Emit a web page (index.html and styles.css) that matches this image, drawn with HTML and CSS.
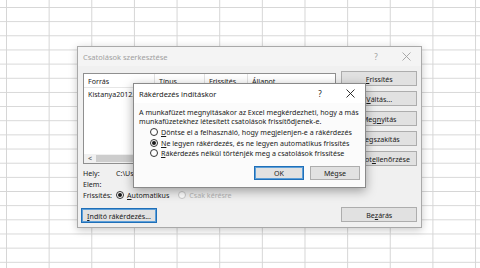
FILE: index.html
```html
<!DOCTYPE html>
<html lang="hu">
<head>
    <meta charset="UTF-8">
    <meta name="viewport" content="width=device-width, initial-scale=1.0">
    <title>Csatolások szerkesztése</title>
    <link rel="stylesheet" href="styles.css">
</head>
<body>
    <div class="sheet">

        <div class="dialog links">
            <div class="titlebar inactive">
                <span class="title">Csatolások szerkesztése</span>
                <span class="tb-btn">?</span>
                <span class="tb-btn">
                    <svg width="9" height="9" viewBox="0 0 9 9"><path d="M0.5 0.5 L8.5 8.5 M8.5 0.5 L0.5 8.5" stroke="currentColor" stroke-width="0.9"/></svg>
                </span>
            </div>
            <div class="links-body">
                <div class="left-col">
                    <div class="listbox">
                        <div class="list-head">
                            <span class="col c-src">Forrás</span>
                            <span class="col c-type">Típus</span>
                            <span class="col c-upd">Frissítés</span>
                            <span class="col c-state">Állapot</span>
                        </div>
                        <div class="list-row">Kistanya2012.xlsx</div>
                        <div class="hscroll">
                            <span class="arrow">&lt;</span>
                            <span class="thumb"></span>
                        </div>
                    </div>

                    <div class="info">
                        <div class="info-row"><span class="lbl">Hely:</span><span>C:\Users\Dokumentumok</span></div>
                        <div class="info-row"><span class="lbl">Elem:</span></div>
                        <div class="info-row">
                            <span class="lbl">Frissítés:</span>
                            <span class="radio checked"></span><span class="opt"><u>A</u>utomatikus</span>
                            <span class="radio disabled"></span><span class="opt disabled">Csak kérésre</span>
                        </div>
                    </div>

                    <button class="btn default start"><u>I</u>ndító rákérdezés...</button>
                </div>

                <div class="right-col">
                    <button class="btn"><u>F</u>rissítés</button>
                    <button class="btn"><u>V</u>áltás...</button>
                    <button class="btn">Meg<u>n</u>yitás</button>
                    <button class="btn">Megszakítás</button>
                    <button class="btn">Állapot <u>e</u>llenőrzése</button>
                    <button class="btn close-btn">Be<u>z</u>árás</button>
                </div>
            </div>
        </div>

        <div class="dialog prompt">
            <div class="titlebar">
                <span class="title">Rákérdezés indításkor</span>
                <span class="tb-btn">?</span>
                <span class="tb-btn">
                    <svg width="9" height="9" viewBox="0 0 9 9"><path d="M0.5 0.5 L8.5 8.5 M8.5 0.5 L0.5 8.5" stroke="currentColor" stroke-width="0.9"/></svg>
                </span>
            </div>
            <div class="prompt-body">
                <p class="msg">A munkafüzet megnyitásakor az Excel megkérdezheti, hogy a más<br>munkafüzetekhez létesített csatolások frissítődjenek-e.</p>
                <div class="choices">
                    <div class="choice"><span class="radio"></span><span><u>D</u>öntse el a felhasználó, hogy megjelenjen-e a rákérdezés</span></div>
                    <div class="choice"><span class="radio checked"></span><span><u>N</u>e legyen rákérdezés, és ne legyen automatikus frissítés</span></div>
                    <div class="choice"><span class="radio"></span><span><u>R</u>ákérdezés nélkül történjék meg a csatolások frissítése</span></div>
                </div>
                <div class="actions">
                    <button class="btn default">OK</button>
                    <button class="btn">Mégse</button>
                </div>
            </div>
        </div>

    </div>
</body>
</html>
```

FILE: styles.css
```css
* {
    box-sizing: border-box;
}
body {
    margin: 0;
    width: 480px;
    height: 268px;
    overflow: hidden;
    font-family: "Noto Sans", "Open Sans", sans-serif;
    font-size: 7.1px;
    color: #1a1a1a;
    background-color: #fff;
    background-image:
        linear-gradient(to right, #d6d6d6 1px, transparent 1px),
        linear-gradient(to bottom, #d6d6d6 1px, transparent 1px);
    background-size: 42.65px 14.17px;
    background-position: 6px 7px;
}
.sheet {
    position: relative;
    width: 480px;
    height: 268px;
}
u {
    text-decoration-thickness: 1px;
    text-underline-offset: 1px;
}

/* windows */
.dialog {
    position: absolute;
    display: flex;
    flex-direction: column;
    background: #f0f0f0;
    border: 1px solid #a9a9a9;
    box-shadow: 0 2px 8px rgba(0, 0, 0, 0.22);
}
.links {
    left: 77px;
    top: 46px;
    width: 345px;
    height: 182px;
}
.prompt {
    left: 133px;
    top: 83px;
    width: 233px;
    height: 105px;
    background: #fbfbfb;
    border-color: #8a8a8a;
    box-shadow: 0 3px 10px rgba(0, 0, 0, 0.35);
}
.titlebar {
    display: flex;
    align-items: center;
    height: 19px;
    padding-left: 5px;
    background: #fff;
    flex-shrink: 0;
}
.titlebar.inactive {
    background: #f4f4f4;
    color: #a0a0a0;
}
.titlebar .title {
    flex: 1;
    font-size: 7.5px;
}
.tb-btn {
    width: 30px;
    height: 19px;
    display: flex;
    align-items: center;
    justify-content: center;
    font-size: 8px;
}

/* buttons */
.btn {
    height: 15px;
    padding: 0;
    display: flex;
    align-items: center;
    justify-content: center;
    white-space: nowrap;
    overflow: hidden;
    font: inherit;
    color: inherit;
    background: #e1e1e1;
    border: 1px solid #adadad;
}
.btn.default {
    border-color: #1f6fb8;
    box-shadow: inset 0 0 0 1px #5d9fd8;
}

/* main dialog */
.links-body {
    display: flex;
    gap: 5px;
    padding: 2px 4px 0 5px;
    flex: 1;
}
.left-col {
    width: 255px;
    display: flex;
    flex-direction: column;
}
.right-col {
    width: 76px;
    display: flex;
    flex-direction: column;
    gap: 5px;
    padding-top: 3px;
}
.close-btn {
    margin-top: 36px;
}
.listbox {
    margin-top: 5px;
    height: 91px;
    display: flex;
    flex-direction: column;
    background: #fff;
    border: 1px solid #8f8f8f;
}
.list-head {
    display: flex;
    height: 14px;
    align-items: center;
    border-bottom: 1px solid #e6e6e6;
}
.col {
    padding-left: 4px;
    height: 100%;
    display: flex;
    align-items: center;
    border-right: 1px solid #e2e2e2;
}
.c-src {
    width: 71px;
}
.c-type {
    width: 50px;
}
.c-upd {
    width: 43px;
}
.c-state {
    flex: 1;
    border-right: none;
}
.list-row {
    height: 11px;
    padding-left: 4px;
    display: flex;
    align-items: center;
    white-space: nowrap;
}
.hscroll {
    margin-top: auto;
    height: 9px;
    display: flex;
    align-items: center;
    background: #f0f0f0;
}
.hscroll .arrow {
    width: 12px;
    text-align: center;
    font-size: 7px;
    font-weight: bold;
    color: #606060;
}
.hscroll .thumb {
    width: 180px;
    height: 7px;
    background: #cdcdcd;
}
.info {
    margin-top: 3px;
}
.info-row {
    height: 11px;
    display: flex;
    align-items: center;
    white-space: nowrap;
}
.lbl {
    width: 33px;
}
.opt {
    margin-left: 3px;
    margin-right: 9px;
}
.opt.disabled {
    color: #b4b4b4;
}
.start {
    margin-top: 8px;
    margin-left: -2px;
    width: 76px;
}

/* radios */
.radio {
    width: 8px;
    height: 8px;
    border-radius: 50%;
    border: 1px solid #333;
    background: #fff;
    display: flex;
    align-items: center;
    justify-content: center;
    flex-shrink: 0;
}
.radio.checked::after {
    content: "";
    width: 4px;
    height: 4px;
    border-radius: 50%;
    background: #1a1a1a;
}
.radio.disabled {
    border-color: #c8c8c8;
}

/* prompt dialog */
.prompt-body {
    flex: 1;
    display: flex;
    flex-direction: column;
    padding: 5px 5px 7px 5px;
}
.msg {
    margin: 0;
    line-height: 9px;
    white-space: nowrap;
}
.choices {
    margin-top: 1px;
    padding-left: 11px;
}
.choice {
    height: 10.5px;
    display: flex;
    align-items: center;
    gap: 3px;
    white-space: nowrap;
}
.actions {
    margin-top: auto;
    display: flex;
    justify-content: flex-end;
    gap: 6px;
}
.actions .btn {
    width: 50px;
    height: 14px;
}
```
